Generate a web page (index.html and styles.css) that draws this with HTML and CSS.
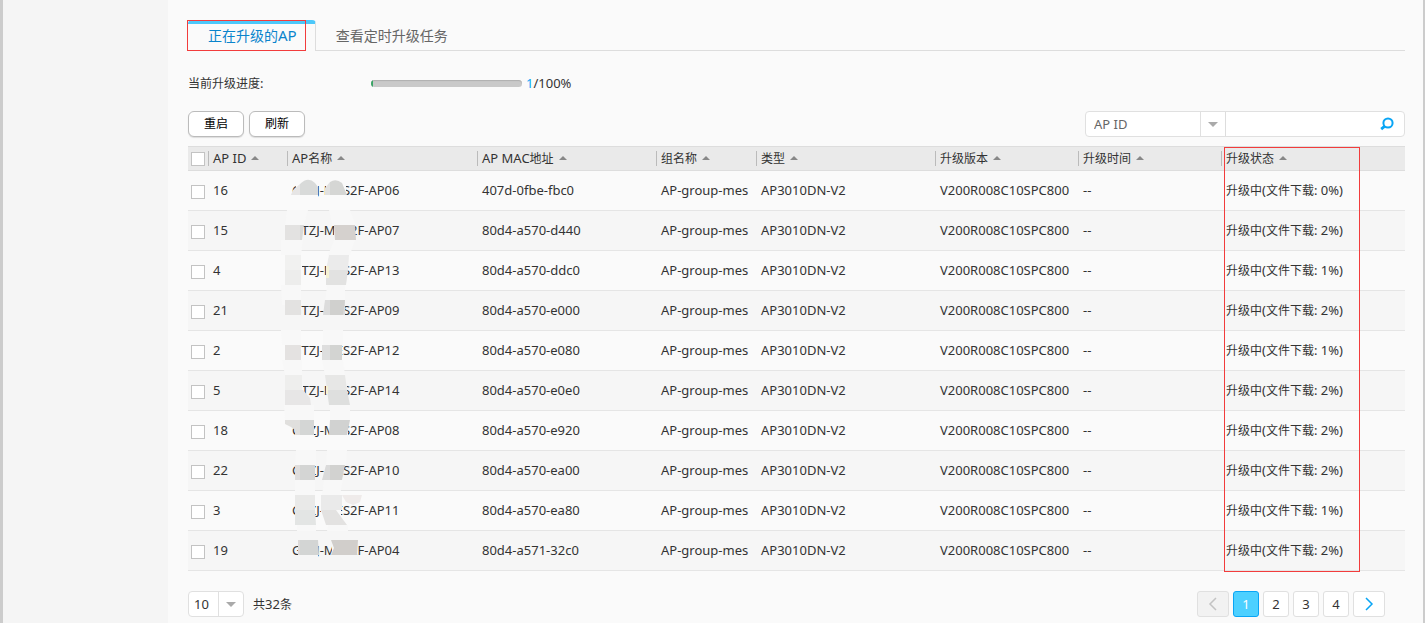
FILE: index.html
```html
<!DOCTYPE html>
<html lang="zh-CN">
<head>
<meta charset="utf-8">
<title>AP升级</title>
<link rel="stylesheet" href="styles.css">
</head>
<body>
<div class="page">
<aside class="sidebar"></aside>
<main class="content">
  <nav class="tabs">
    <a href="#upgrading" class="tab tab-active">正在升级的<span class="tab-latin">AP</span></a>
    <a href="#scheduled" class="tab">查看定时升级任务</a>
    <span class="mark mark-tab"></span>
  </nav>

  <section class="progress-row">
    <span class="progress-label" id="progress-label"><span class="zh">当前升级进度</span>:</span>
    <div class="bar" role="progressbar" aria-labelledby="progress-label" aria-valuenow="1" aria-valuemin="0" aria-valuemax="100"><div class="bar-fill" style="width:1%"></div></div>
    <span class="progress-value"><span class="current">1</span>/100%</span>
  </section>

  <section class="toolbar">
    <button type="button" class="btn">重启</button>
    <button type="button" class="btn">刷新</button>
    <form class="search">
      <span class="select select-field"><select aria-label="搜索字段"><option>AP ID</option></select></span>
      <input class="search-input" type="text" aria-label="搜索内容">
      <button type="button" class="search-btn" aria-label="搜索"><svg width="14" height="14" viewBox="0 0 14 14"><circle cx="8" cy="6" r="4.6" fill="none" stroke="#09a5f5" stroke-width="2"/><path d="M4.8 9.2L1.2 12.2" stroke="#09a5f5" stroke-width="2.8"/></svg></button>
    </form>
  </section>

  <div class="table-wrap">
    <table class="grid">
      <colgroup><col class="c-check"><col class="c-id"><col class="c-name"><col class="c-mac"><col class="c-group"><col class="c-type"><col class="c-version"><col class="c-time"><col></colgroup>
      <thead>
        <tr>
          <th class="check"><input type="checkbox" aria-label="全选"></th>
          <th>AP ID<i class="sort"></i></th>
          <th>AP<span class="zh">名称</span><i class="sort"></i></th>
          <th>AP MAC<span class="zh">地址</span><i class="sort"></i></th>
          <th><span class="zh">组名称</span><i class="sort"></i></th>
          <th><span class="zh">类型</span><i class="sort"></i></th>
          <th><span class="zh">升级版本</span><i class="sort"></i></th>
          <th><span class="zh">升级时间</span><i class="sort"></i></th>
          <th><span class="zh">升级状态</span><i class="sort"></i></th>
        </tr>
      </thead>
      <tbody>
        <tr><td class="check"><input type="checkbox" aria-label="选择 16"></td><td>16</td><td>GTZJ-MES2F-AP06</td><td>407d-0fbe-fbc0</td><td>AP-group-mes</td><td>AP3010DN-V2</td><td>V200R008C10SPC800</td><td>--</td><td><span class="zh">升级中</span>(<span class="zh">文件下载</span>: 0%)</td></tr>
        <tr><td class="check"><input type="checkbox" aria-label="选择 15"></td><td>15</td><td>GTZJ-MES2F-AP07</td><td>80d4-a570-d440</td><td>AP-group-mes</td><td>AP3010DN-V2</td><td>V200R008C10SPC800</td><td>--</td><td><span class="zh">升级中</span>(<span class="zh">文件下载</span>: 2%)</td></tr>
        <tr><td class="check"><input type="checkbox" aria-label="选择 4"></td><td>4</td><td>GTZJ-MES2F-AP13</td><td>80d4-a570-ddc0</td><td>AP-group-mes</td><td>AP3010DN-V2</td><td>V200R008C10SPC800</td><td>--</td><td><span class="zh">升级中</span>(<span class="zh">文件下载</span>: 1%)</td></tr>
        <tr><td class="check"><input type="checkbox" aria-label="选择 21"></td><td>21</td><td>GTZJ-MES2F-AP09</td><td>80d4-a570-e000</td><td>AP-group-mes</td><td>AP3010DN-V2</td><td>V200R008C10SPC800</td><td>--</td><td><span class="zh">升级中</span>(<span class="zh">文件下载</span>: 2%)</td></tr>
        <tr><td class="check"><input type="checkbox" aria-label="选择 2"></td><td>2</td><td>GTZJ-MES2F-AP12</td><td>80d4-a570-e080</td><td>AP-group-mes</td><td>AP3010DN-V2</td><td>V200R008C10SPC800</td><td>--</td><td><span class="zh">升级中</span>(<span class="zh">文件下载</span>: 1%)</td></tr>
        <tr><td class="check"><input type="checkbox" aria-label="选择 5"></td><td>5</td><td>GTZJ-MES2F-AP14</td><td>80d4-a570-e0e0</td><td>AP-group-mes</td><td>AP3010DN-V2</td><td>V200R008C10SPC800</td><td>--</td><td><span class="zh">升级中</span>(<span class="zh">文件下载</span>: 2%)</td></tr>
        <tr><td class="check"><input type="checkbox" aria-label="选择 18"></td><td>18</td><td>GTZJ-MES2F-AP08</td><td>80d4-a570-e920</td><td>AP-group-mes</td><td>AP3010DN-V2</td><td>V200R008C10SPC800</td><td>--</td><td><span class="zh">升级中</span>(<span class="zh">文件下载</span>: 2%)</td></tr>
        <tr><td class="check"><input type="checkbox" aria-label="选择 22"></td><td>22</td><td>GTZJ-MES2F-AP10</td><td>80d4-a570-ea00</td><td>AP-group-mes</td><td>AP3010DN-V2</td><td>V200R008C10SPC800</td><td>--</td><td><span class="zh">升级中</span>(<span class="zh">文件下载</span>: 2%)</td></tr>
        <tr><td class="check"><input type="checkbox" aria-label="选择 3"></td><td>3</td><td>GTZJ-MES2F-AP11</td><td>80d4-a570-ea80</td><td>AP-group-mes</td><td>AP3010DN-V2</td><td>V200R008C10SPC800</td><td>--</td><td><span class="zh">升级中</span>(<span class="zh">文件下载</span>: 1%)</td></tr>
        <tr><td class="check"><input type="checkbox" aria-label="选择 19"></td><td>19</td><td>GTZJ-MES2F-AP04</td><td>80d4-a571-32c0</td><td>AP-group-mes</td><td>AP3010DN-V2</td><td>V200R008C10SPC800</td><td>--</td><td><span class="zh">升级中</span>(<span class="zh">文件下载</span>: 2%)</td></tr>
      </tbody>
    </table>
    <!-- mosaic strokes that hide part of each AP name -->
    <svg class="mosaic" width="90" height="390" viewBox="280 175 90 390" aria-hidden="true">
      <path fill="#fafafa" d="M296 185H318V198H296ZM326 185H346V198H326ZM285 264H302V279H285ZM326 264H347V279H326ZM285 344H301V359H285ZM322 344H342V360H322ZM295 424H314V438H295ZM330 424H348V438H330ZM295 504H315V519H295ZM321 504H341V519H321Z"/>
      <path fill="#f6f6f6" d="M285 224H303V240H285ZM334 224H355V240H334ZM285 304H301V319H285ZM324 304H344V319H324ZM285 384H303V399H285ZM328 384H347V399H328ZM295 464H315V483H295ZM324 464H343V483H324ZM300 543H318V559H300ZM332 543H357V559H332Z"/>
      <path fill="#e6e5e5" d="M291 195L293 190 300 184V195Z"/><path fill="#d8dad9" d="M300 184Q308 176 315 183L318 187V195H300Z"/><path fill="#e1e1e1" d="M325 195V188L330 182V195Z"/><path fill="#d5d6d4" d="M330 182Q336 178 342 183L347 195H330Z"/>
      <path fill="#f8f8f8" d="M287 210H308L304 225H285ZM329 210H350L356 225H332ZM281 240H303L301 255H281ZM334 240H355L350 255H328ZM281 285H301V305H282ZM327 285H345V305H325Z"/>
      <path fill="#e3e2e1" d="M285 225H300V240H285Z"/><path fill="#d9d9d8" d="M300 225H304L302 240H300Z"/><path fill="#d5d1ce" d="M334 225H355L356 240H335Z"/>
      <path fill="#f1f1f0" d="M285 255H301V270H285Z"/><path fill="#ededec" d="M285 270H301V285H285Z"/><path fill="#ebebeb" d="M329 255H349L348 270H326Z"/><path fill="#e2e2e1" d="M326 270H348L346 285H326Z"/><path fill="#f5f2d4" d="M326 266H329V278H326Z"/>
      <path fill="#e3e2e1" d="M285 300H301V315H285Z"/><path fill="#dcdcdc" d="M325 300H345V315H323Z"/><path fill="#d0d0ce" d="M330 300H345L343 315H330Z"/>
      <path fill="#f8f8f8" d="M281 330H301V345H282ZM323 330H343V345H323ZM282 360H302V375H285ZM322 360H343L345 375H325ZM284 405H314V420H285ZM330 405H350V420H330Z"/>
      <path fill="#e4e2e1" d="M285 345H301V360H285Z"/><path fill="#dedede" d="M322 345H342V360H322Z"/><path fill="#d3d4d2" d="M330 345H342V360H330Z"/>
      <path fill="#eeeeed" d="M285 375H302V390H285Z"/><path fill="#e7e6e6" d="M285 390H303L310 398 311 405H285Z"/><path fill="#e7e7e6" d="M325 375H345L347 390H327Z"/><path fill="#dedfde" d="M327 390H347L350 405H329Z"/><path fill="#f5f2d4" d="M326 386H328V394H326Z"/>
      <path fill="#e0dfdd" d="M285 420H300V435H295V430L291 427 285 424Z"/><path fill="#d4d6d5" d="M300 420H314V435H300Z"/><path fill="#d1d2d1" d="M330 420H350L347 435H329Z"/>
      <path fill="#f8f8f8" d="M296 450H316V465H295ZM327 450H347L346 465H326ZM295 480H315V495H295ZM324 480H343L340 495H322ZM297 525H316V531H297ZM328 525H348V531H327Z"/>
      <path fill="#dfdddc" d="M295 465H300V480H295Z"/><path fill="#d4d5d4" d="M300 465H315V480H300Z"/><path fill="#dadada" d="M326 465H332L330 480H322Z"/><path fill="#d2d2d0" d="M330 465H345L342 480H330Z"/>
      <path fill="#e9e9e8" d="M295 495H315V510H295Z"/><path fill="#e3e5e4" d="M295 510H315L316 525H295Z"/><path fill="#eaeaea" d="M321 495H342V510H321Z"/><path fill="#efebea" d="M342 495H362L360 502 353 505 346 502Z"/><path fill="#e3e2e1" d="M321 510H336L347 525H326Z"/>
      <path fill="#dcd9d8" d="M298 540H303V555H298Z"/><path fill="#d3d5d4" d="M300 540H318L319 555H300Z"/><path fill="#d1cecb" d="M331 540H358L357 555H331L334 548Z"/>
    </svg>
    <span class="mark mark-status"></span>
  </div>

  <footer class="pager">
    <span class="select select-size"><select aria-label="每页条数"><option>10</option></select></span>
    <span class="total"><span class="zh">共</span>32<span class="zh">条</span></span>
    <nav class="pages">
      <button type="button" class="page-btn arrow" disabled aria-label="上一页"><svg width="10" height="14" viewBox="0 0 10 14"><path d="M8 1L2 7l6 6" fill="none" stroke="#c3c3c3" stroke-width="1.5"/></svg></button>
      <button type="button" class="page-btn current-page">1</button>
      <button type="button" class="page-btn">2</button>
      <button type="button" class="page-btn">3</button>
      <button type="button" class="page-btn">4</button>
      <button type="button" class="page-btn arrow" aria-label="下一页"><svg width="10" height="14" viewBox="0 0 10 14"><path d="M2 1l6 6-6 6" fill="none" stroke="#09a5f5" stroke-width="1.5"/></svg></button>
    </nav>
  </footer>
</main>
</div>
</body>
</html>
```

FILE: styles.css
```css
* { box-sizing: border-box; }

body {
  margin: 0;
  background: #fafafa;
  color: #333;
  font: 13px/20px "Noto Sans", "Noto Sans CJK SC", sans-serif;
}

button, input, select { font: inherit; color: inherit; margin: 0; }

.zh { font-size: 12px; line-height: 1; }

.page {
  display: flex;
  min-height: 100vh;
  border-left: 3px solid #ccc;
  border-right: 2px solid #ccc;
}

.sidebar { flex: 0 0 165px; background: #f5f5f5; }

.content { flex: 1; min-width: 0; padding: 20px 18px 6px 20px; }

.tabs { position: relative; display: flex; height: 31px; }

.tab {
  padding: 0 20px;
  border-bottom: 1px solid #ddd;
  color: #666;
  font-size: 14px;
  line-height: 31px;
  text-decoration: none;
  white-space: nowrap;
}

.tab:not(.tab-active) { flex: 1; }

.tab-active {
  flex: 0 0 auto;
  padding: 0 18px 0 20px;
  border-top: 4px solid #4dc8fa;
  border-right: 1px solid #ddd;
  border-bottom: 0;
  border-radius: 4px 4px 0 0;
  color: #0a84cc;
  line-height: 23px;
}

.tab-latin { font-size: 15px; }

.mark { position: absolute; border: 1px solid #f23c3c; pointer-events: none; }
.mark-tab { left: -1px; top: 0; width: 119px; height: 31px; }
.mark-status { left: 1036px; top: 1px; width: 136px; height: 425px; }

.progress-row { display: flex; align-items: center; height: 20px; margin-top: 22px; }
.progress-label { flex: 0 0 183px; }

.bar {
  width: 151px;
  height: 7px;
  margin-right: 4px;
  overflow: hidden;
  border-radius: 4px;
  background: #c9c9c9;
  box-shadow: inset 0 1px 1px #b0b0b0;
}

.bar-fill { height: 100%; background: #3aa566; }
.current { color: #09a5f5; }

.toolbar { display: flex; gap: 5px; height: 26px; margin-top: 18px; }

.btn {
  width: 56px;
  height: 26px;
  padding: 0;
  border: 1px solid #bbb;
  border-radius: 6px;
  background: #fff;
  box-shadow: 0 1px 1px #ddd;
  color: #000;
  font-size: 12px;
}

.search {
  position: relative;
  display: flex;
  width: 320px;
  margin-left: auto;
  border: 1px solid #e0e0e0;
  border-radius: 4px;
  background: #fff;
}

.select { position: relative; display: flex; }

.select select {
  width: 100%;
  padding: 0 8px;
  border: 0;
  background: none;
  appearance: none;
  outline: 0;
}

.select::before {
  content: "";
  position: absolute;
  right: 24px;
  top: 0;
  bottom: 0;
  border-left: 1px solid #e0e0e0;
}

.select::after {
  content: "";
  position: absolute;
  right: 7px;
  top: 10px;
  border: 5px solid transparent;
  border-top-color: #aaa;
  border-bottom: 0;
  pointer-events: none;
}

.select-field { flex: 0 0 140px; border-right: 1px solid #ddd; color: #666; }
.search-input { flex: 1; min-width: 0; padding: 0 8px; border: 0; background: none; outline: 0; }
.search-btn { width: 34px; padding: 0; border: 0; background: none; line-height: 0; }

.table-wrap { position: relative; margin-top: 9px; }

.grid { width: 100%; table-layout: fixed; border-collapse: separate; border-spacing: 0; }
.c-check { width: 20px; }
.c-id { width: 79px; }
.c-name { width: 190px; }
.c-mac, .c-type { width: 179px; }
.c-group { width: 100px; }
.c-version, .c-time { width: 143px; }

.grid th {
  position: relative;
  height: 25px;
  padding: 0 0 1px 5px;
  border-top: 1px solid #ddd;
  border-bottom: 1px solid #ddd;
  background: #eaeaea;
  font-weight: 400;
  line-height: 20px;
  text-align: left;
  white-space: nowrap;
}

.grid th + th::before {
  content: "";
  position: absolute;
  left: 0;
  top: 4px;
  height: 15px;
  border-left: 1px solid #bbb;
}

.grid td {
  height: 40px;
  padding: 0 0 2px 5px;
  border-bottom: 1px solid #e5e5e5;
  line-height: 20px;
  white-space: nowrap;
}

.grid tbody tr:nth-child(even) { background: #f6f6f6; }

.grid .check { padding: 0 0 0 3px; line-height: 0; }
.grid td.check { padding-top: 2px; }

.check input {
  width: 14px;
  height: 14px;
  border: 1px solid #c3c3c3;
  background: #fff;
  appearance: none;
  vertical-align: middle;
}

.sort {
  display: inline-block;
  margin-left: 5px;
  border: 4px solid transparent;
  border-top: 0;
  border-bottom-color: #888;
  vertical-align: 3px;
}

.mosaic { position: absolute; left: 92px; top: 29px; pointer-events: none; }

.pager { display: flex; align-items: center; gap: 9px; height: 26px; margin-top: 20px; }
.select-size { width: 56px; height: 26px; border: 1px solid #e0e0e0; border-radius: 4px; background: #fff; }
.select-size select { padding: 0 5px; }

.pages { display: flex; gap: 4px; margin: 0 20px 0 auto; }

.page-btn {
  width: 26px;
  height: 26px;
  padding: 0;
  border: 1px solid #e0e0e0;
  border-radius: 3px;
  background: #fff;
}

.arrow { width: 32px; line-height: 0; }
.arrow:disabled { background: #f2f2f2; }
.current-page { border-color: #09a5f5; background: #4dd0ff; color: #fff; }
```
